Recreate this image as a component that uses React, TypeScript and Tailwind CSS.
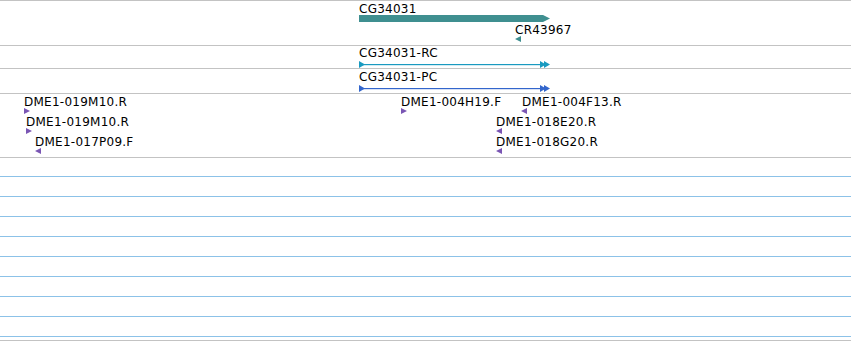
import React from 'react';

const font = { fontFamily: '"DejaVu Sans", Verdana, sans-serif' };

type Label = { text: string; x: number; y: number };
type Marker = { x: number; y: number; dir: 'l' | 'r' };

const labels: Label[] = [
  { text: 'CG34031', x: 359, y: 3 },
  { text: 'CR43967', x: 515, y: 24 },
  { text: 'CG34031-RC', x: 359, y: 47 },
  { text: 'CG34031-PC', x: 359, y: 71 },
  { text: 'DME1-019M10.R', x: 24, y: 96 },
  { text: 'DME1-004H19.F', x: 401, y: 96 },
  { text: 'DME1-004F13.R', x: 522, y: 96 },
  { text: 'DME1-019M10.R', x: 26, y: 116 },
  { text: 'DME1-018E20.R', x: 496, y: 116 },
  { text: 'DME1-017P09.F', x: 35, y: 136 },
  { text: 'DME1-018G20.R', x: 496, y: 136 },
];

const clones: Marker[] = [
  { x: 24, y: 108, dir: 'r' },
  { x: 401, y: 108, dir: 'r' },
  { x: 521, y: 108, dir: 'l' },
  { x: 26, y: 128, dir: 'r' },
  { x: 496, y: 128, dir: 'l' },
  { x: 35, y: 148, dir: 'l' },
  { x: 496, y: 148, dir: 'l' },
];

const Arrow = ({ m, color }: { m: Marker; color: string }) =>
  m.dir === 'r' ? (
    <polygon points={`${m.x},${m.y} ${m.x + 6},${m.y + 3} ${m.x},${m.y + 6}`} fill={color} />
  ) : (
    <polygon points={`${m.x + 6},${m.y} ${m.x},${m.y + 3} ${m.x + 6},${m.y + 6}`} fill={color} />
  );

const Transcript = ({ y, color }: { y: number; color: string }) => (
  <g fill={color}>
    <rect x={359} y={y} width={188} height={1.2} />
    <polygon points={`359,${y - 3} 365,${y + 0.5} 359,${y + 4}`} />
    <polygon points={`540,${y - 3} 546,${y + 0.5} 540,${y + 4}`} />
    <polygon points={`544,${y - 3} 550,${y + 0.5} 544,${y + 4}`} />
  </g>
);

export default function App() {
  return (
    <div className="relative h-[341px] w-[851px] overflow-hidden bg-white" style={font}>
      <div className="flex flex-col">
        <div className="h-[46px] border-y border-[#c3c3c3]" />
        <div className="h-[23px] border-b border-[#c3c3c3]" />
        <div className="h-[25px] border-b border-[#c3c3c3]" />
        <div className="h-[64px] border-b border-[#c3c3c3]" />
        <div className="h-[19px] border-b border-[#8cc2e8]" />
        {Array.from({ length: 8 }).map((_, i) => (
          <div key={i} className="h-[20px] border-b border-[#8cc2e8]" />
        ))}
        <div className="h-[4px] border-b border-[#c3c3c3]" />
      </div>

      <svg className="absolute left-0 top-0" width={851} height={341}>
        <rect x={359} y={15} width={184} height={7} fill="#3f8f90" />
        <polygon points="543,15 550,18.5 543,22" fill="#3f8f90" />
        <polygon points="521,36 515,39 521,42" fill="#3f8f90" />
        <Transcript y={64} color="#1a9ac0" />
        <Transcript y={88} color="#3366cc" />
        {clones.map((m, i) => (
          <Arrow key={i} m={m} color="#7a56b4" />
        ))}
      </svg>

      {labels.map((l, i) => (
        <span
          key={i}
          className="absolute whitespace-nowrap text-[12px] leading-[12px] tracking-[0.25px] text-black"
          style={{ left: l.x, top: l.y }}
        >
          {l.text}
        </span>
      ))}
    </div>
  );
}
